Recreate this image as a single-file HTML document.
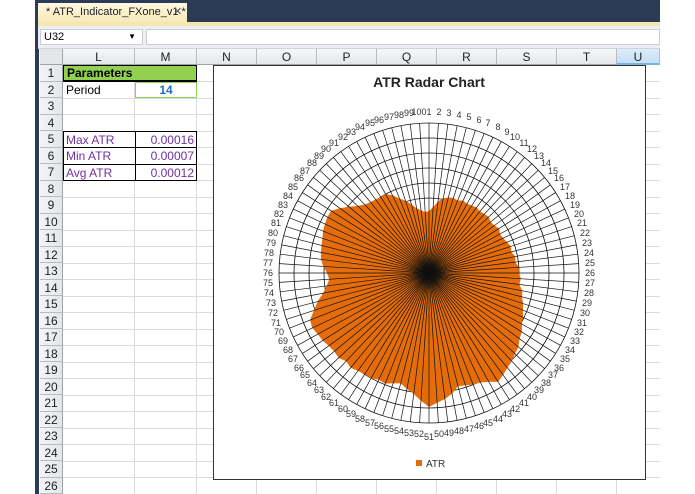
<!DOCTYPE html>
<html><head><meta charset="utf-8"><style>
*{margin:0;padding:0;box-sizing:border-box}
body{width:695px;height:494px;overflow:hidden;background:#fff;position:relative;font-family:"Liberation Sans",sans-serif;font-size:12px}
.a{position:absolute}
.ch{position:absolute;top:49px;height:16px;background:linear-gradient(#f6f7f8,#e4e6ea);border-right:1px solid #b8bcc2;border-bottom:1px solid #9ea3aa;text-align:center;font-size:12px;line-height:16px;color:#222}
.rh{position:absolute;left:40px;width:23px;background:linear-gradient(90deg,#f3f4f6,#e4e6ea);border-bottom:1px solid #b8bcc2;border-right:1px solid #9ea3aa;text-align:center;font-size:12px;color:#222}
.c{position:absolute;font-size:12px;line-height:16px;padding:0 3px}
#lbl span{position:absolute;width:20px;text-align:center}
</style></head><body>
<div class="a" style="left:35px;top:0;width:625px;height:22px;background:#2b3a55"></div>
<div class="a" style="left:35px;top:0;width:4px;height:494px;background:#2b3a55"></div>
<div class="a" style="left:38px;top:3px;width:149px;height:20px;background:linear-gradient(#fdf8e2,#f7e8b4);font-size:11px;line-height:19px;padding-left:8px;color:#222">* ATR_Indicator_FXone_v1 *<span style="position:absolute;left:135px;color:#555">✕</span></div>
<div class="a" style="left:38px;top:22px;width:622px;height:4px;background:#f5e6b0"></div>
<div class="a" style="left:38px;top:26px;width:622px;height:23px;background:#eceef1;border-bottom:1px solid #d0d3d8"></div>
<div class="a" style="left:40px;top:29px;width:103px;height:16px;background:#fff;border:1px solid #c9ccd1;font-size:11px;line-height:14px;padding-left:3px">U32<span style="position:absolute;right:6px;font-size:8px">▼</span></div>
<div class="a" style="left:146px;top:29px;width:514px;height:16px;background:#fff;border:1px solid #c9ccd1"></div>
<div class="a" style="left:40px;top:49px;width:23px;height:16px;background:#e4e6ea;border-right:1px solid #9ea3aa;border-bottom:1px solid #9ea3aa"></div>
<div class="ch" style="left:63px;width:72px">L</div>
<div class="ch" style="left:135px;width:62px">M</div>
<div class="ch" style="left:197px;width:60px">N</div>
<div class="ch" style="left:257px;width:60px">O</div>
<div class="ch" style="left:317px;width:60px">P</div>
<div class="ch" style="left:377px;width:60px">Q</div>
<div class="ch" style="left:437px;width:60px">R</div>
<div class="ch" style="left:497px;width:60px">S</div>
<div class="ch" style="left:557px;width:60px">T</div>
<div class="ch" style="left:617px;width:43px;background:linear-gradient(#dcecfb,#c4dff7);border-bottom:2px solid #7fb1e0">U</div>
<svg class="a" style="left:63px;top:65px" width="597" height="429">
<g stroke="#d9dbde" stroke-width="1">
<path d="M71.5 0V429M133.5 0V429M193.5 0V429M253.5 0V429M313.5 0V429M373.5 0V429M433.5 0V429M493.5 0V429M553.5 0V429"/>
<path d="M0 16.5H597M0 33.5H597M0 49.5H597M0 66.5H597M0 82.5H597M0 99.5H597M0 115.5H597M0 132.5H597M0 148.5H597M0 165.5H597M0 181.5H597M0 198.5H597M0 214.5H597M0 231.5H597M0 247.5H597M0 264.5H597M0 280.5H597M0 297.5H597M0 313.5H597M0 330.5H597M0 346.5H597M0 363.5H597M0 379.5H597M0 396.5H597M0 412.5H597"/>
</g></svg>
<div class="rh" style="top:65px;height:17px;line-height:16px">1</div>
<div class="rh" style="top:82px;height:16px;line-height:16px">2</div>
<div class="rh" style="top:98px;height:17px;line-height:16px">3</div>
<div class="rh" style="top:115px;height:16px;line-height:16px">4</div>
<div class="rh" style="top:131px;height:17px;line-height:16px">5</div>
<div class="rh" style="top:148px;height:16px;line-height:16px">6</div>
<div class="rh" style="top:164px;height:17px;line-height:16px">7</div>
<div class="rh" style="top:181px;height:16px;line-height:16px">8</div>
<div class="rh" style="top:197px;height:17px;line-height:16px">9</div>
<div class="rh" style="top:214px;height:16px;line-height:16px">10</div>
<div class="rh" style="top:230px;height:17px;line-height:16px">11</div>
<div class="rh" style="top:247px;height:16px;line-height:16px">12</div>
<div class="rh" style="top:263px;height:17px;line-height:16px">13</div>
<div class="rh" style="top:280px;height:16px;line-height:16px">14</div>
<div class="rh" style="top:296px;height:17px;line-height:16px">15</div>
<div class="rh" style="top:313px;height:16px;line-height:16px">16</div>
<div class="rh" style="top:329px;height:17px;line-height:16px">17</div>
<div class="rh" style="top:346px;height:16px;line-height:16px">18</div>
<div class="rh" style="top:362px;height:17px;line-height:16px">19</div>
<div class="rh" style="top:379px;height:16px;line-height:16px">20</div>
<div class="rh" style="top:395px;height:17px;line-height:16px">21</div>
<div class="rh" style="top:412px;height:16px;line-height:16px">22</div>
<div class="rh" style="top:428px;height:17px;line-height:16px">23</div>
<div class="rh" style="top:445px;height:16px;line-height:16px">24</div>
<div class="rh" style="top:461px;height:17px;line-height:16px">25</div>
<div class="rh" style="top:478px;height:16px;line-height:16px">26</div>
<div class="c" style="left:63px;top:65px;width:134px;height:17px;background:#92d050;border:1px solid #000;border-bottom-width:2px;font-weight:bold;line-height:14px">Parameters</div>
<div class="c" style="left:63px;top:82px;width:72px;height:16px">Period</div>
<div class="c" style="left:135px;top:82px;width:62px;height:16px;border:1px solid #92d050;text-align:center;color:#1f6fc0;font-weight:bold;line-height:14px">14</div>
<div class="a" style="left:63px;top:131px;width:134px;height:50px;border:1px solid #000;background:#fff"></div>
<div class="a" style="left:135px;top:131px;width:1px;height:50px;background:#000"></div>
<div class="a" style="left:63px;top:147px;width:134px;height:1px;background:#000"></div>
<div class="a" style="left:63px;top:164px;width:134px;height:1px;background:#000"></div>
<div class="c" style="left:63px;top:132px;color:#7030a0">Max ATR</div>
<div class="c" style="left:63px;top:148px;color:#7030a0">Min ATR</div>
<div class="c" style="left:63px;top:165px;color:#7030a0">Avg ATR</div>
<div class="c" style="left:135px;top:132px;width:62px;text-align:right;color:#7030a0">0.00016</div>
<div class="c" style="left:135px;top:148px;width:62px;text-align:right;color:#7030a0">0.00007</div>
<div class="c" style="left:135px;top:165px;width:62px;text-align:right;color:#7030a0">0.00012</div>
<div class="a" style="left:213px;top:65px;width:433px;height:415px;background:#fff;border:1px solid #333"></div>
<svg class="a" style="left:0;top:0" width="695" height="494">
<text x="429" y="87" text-anchor="middle" font-family="Liberation Sans,sans-serif" font-size="14" font-weight="bold" fill="#222">ATR Radar Chart</text>
<g id="rings" fill="none" stroke="#111" stroke-width="0.8"></g>
<polygon id="poly" fill="#e46c0a"></polygon>
<g id="spokes" stroke="#111" stroke-width="0.7"></g>
<rect x="416" y="460" width="6" height="6" fill="#e46c0a"/>
<text x="426" y="467" font-family="Liberation Sans,sans-serif" font-size="10" fill="#333">ATR</text>
</svg>
<div id="lbl" class="a" style="left:0;top:0;width:695px;height:494px;font-size:9px;color:#333;line-height:10px">
<span style="left:419px;top:107px">1</span><span style="left:429px;top:107px">2</span><span style="left:439px;top:108px">3</span><span style="left:449px;top:110px">4</span><span style="left:459px;top:112px">5</span><span style="left:469px;top:115px">6</span><span style="left:478px;top:118px">7</span><span style="left:488px;top:122px">8</span><span style="left:497px;top:127px">9</span><span style="left:505px;top:132px">10</span>
<span style="left:514px;top:138px">11</span><span style="left:522px;top:144px">12</span><span style="left:529px;top:151px">13</span><span style="left:536px;top:158px">14</span><span style="left:543px;top:166px">15</span><span style="left:549px;top:173px">16</span><span style="left:555px;top:182px">17</span><span style="left:560px;top:191px">18</span><span style="left:565px;top:200px">19</span><span style="left:569px;top:209px">20</span>
<span style="left:572px;top:218px">21</span><span style="left:575px;top:228px">22</span><span style="left:577px;top:238px">23</span><span style="left:579px;top:248px">24</span><span style="left:580px;top:258px">25</span><span style="left:580px;top:268px">26</span><span style="left:580px;top:278px">27</span><span style="left:579px;top:288px">28</span><span style="left:577px;top:298px">29</span><span style="left:575px;top:308px">30</span>
<span style="left:572px;top:318px">31</span><span style="left:569px;top:327px">32</span><span style="left:565px;top:336px">33</span><span style="left:560px;top:345px">34</span><span style="left:555px;top:354px">35</span><span style="left:549px;top:363px">36</span><span style="left:543px;top:370px">37</span><span style="left:536px;top:378px">38</span><span style="left:529px;top:385px">39</span><span style="left:522px;top:392px">40</span>
<span style="left:514px;top:398px">41</span><span style="left:505px;top:404px">42</span><span style="left:497px;top:409px">43</span><span style="left:488px;top:414px">44</span><span style="left:478px;top:418px">45</span><span style="left:469px;top:421px">46</span><span style="left:459px;top:424px">47</span><span style="left:449px;top:426px">48</span><span style="left:439px;top:428px">49</span><span style="left:429px;top:429px">50</span>
<span style="left:419px;top:432px">51</span><span style="left:409px;top:429px">52</span><span style="left:399px;top:428px">53</span><span style="left:389px;top:426px">54</span><span style="left:379px;top:424px">55</span><span style="left:369px;top:421px">56</span><span style="left:360px;top:418px">57</span><span style="left:350px;top:414px">58</span><span style="left:341px;top:409px">59</span><span style="left:333px;top:404px">60</span>
<span style="left:324px;top:398px">61</span><span style="left:316px;top:392px">62</span><span style="left:309px;top:385px">63</span><span style="left:302px;top:378px">64</span><span style="left:295px;top:370px">65</span><span style="left:289px;top:363px">66</span><span style="left:283px;top:354px">67</span><span style="left:278px;top:345px">68</span><span style="left:273px;top:336px">69</span><span style="left:269px;top:327px">70</span>
<span style="left:266px;top:318px">71</span><span style="left:263px;top:308px">72</span><span style="left:261px;top:298px">73</span><span style="left:259px;top:288px">74</span><span style="left:258px;top:278px">75</span><span style="left:258px;top:268px">76</span><span style="left:258px;top:258px">77</span><span style="left:259px;top:248px">78</span><span style="left:261px;top:238px">79</span><span style="left:263px;top:228px">80</span>
<span style="left:266px;top:218px">81</span><span style="left:269px;top:209px">82</span><span style="left:273px;top:200px">83</span><span style="left:278px;top:191px">84</span><span style="left:283px;top:182px">85</span><span style="left:289px;top:173px">86</span><span style="left:295px;top:166px">87</span><span style="left:302px;top:158px">88</span><span style="left:309px;top:151px">89</span><span style="left:316px;top:144px">90</span>
<span style="left:324px;top:138px">91</span><span style="left:333px;top:132px">92</span><span style="left:341px;top:127px">93</span><span style="left:350px;top:122px">94</span><span style="left:360px;top:118px">95</span><span style="left:369px;top:115px">96</span><span style="left:379px;top:112px">97</span><span style="left:389px;top:110px">98</span><span style="left:399px;top:108px">99</span><span style="left:409px;top:107px">100</span>
</div>
<script>
var cx=429,cy=273,R=150;
var r=[62,66,72,76,78,79,78,80,79,80,81,80,81,82,80,81,83,81,82,84,86,85,88,87,90,90,92,91,95,96,99,101,104,106,110,112,116,118,121,123,126,129,124,121,120,118,117,123,127,130,134,128,122,118,114,116,119,118,120,120,121,123,121,124,123,124,126,127,129,128,121,115,108,103,100,102,106,109,110,111,112,114,115,116,116,110,104,98,94,92,91,90,90,86,80,76,71,66,63,61];
var ns="http://www.w3.org/2000/svg";
var rings=document.getElementById('rings');
for(var i=1;i<=10;i++){var c=document.createElementNS(ns,'circle');c.setAttribute('cx',cx);c.setAttribute('cy',cy);c.setAttribute('r',i*15);rings.appendChild(c);}
var pts=[],sp=document.getElementById('spokes');
for(var k=0;k<100;k++){var a=k*3.6*Math.PI/180,s=Math.sin(a),co=Math.cos(a);
pts.push((cx+r[k]*s).toFixed(1)+','+(cy-r[k]*co).toFixed(1));
var l=document.createElementNS(ns,'line');l.setAttribute('x1',cx);l.setAttribute('y1',cy);l.setAttribute('x2',(cx+R*s).toFixed(1));l.setAttribute('y2',(cy-R*co).toFixed(1));sp.appendChild(l);}
document.getElementById('poly').setAttribute('points',pts.join(' '));
</script>
</body></html>
